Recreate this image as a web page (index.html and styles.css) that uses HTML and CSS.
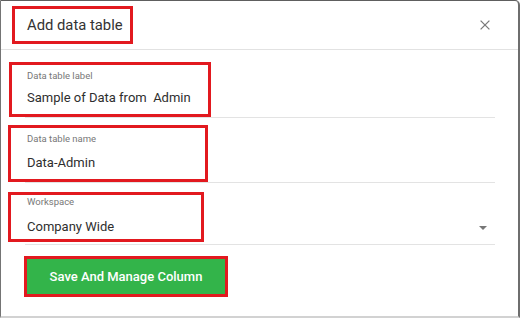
FILE: index.html
```html
<!DOCTYPE html>
<html>
<head>
<meta charset="utf-8">
<link rel="stylesheet" href="styles.css">
</head>
<body>
<div class="dialog">
  <div class="header">
    <div class="mark title-mark"><span class="title">Add data table</span></div>
    <svg class="close" width="10" height="10" viewBox="0 0 10 10"><path d="M0.6 0.6L9.4 9.4M9.4 0.6L0.6 9.4" stroke="#7a7a7a" stroke-width="1.3" fill="none"/></svg>
  </div>
  <div class="body">
    <div class="field f1">
      <div class="mark">
        <div class="label">Data table label</div>
        <div class="value">Sample of Data from&nbsp; Admin</div>
      </div>
    </div>
    <div class="field f2">
      <div class="mark">
        <div class="label">Data table name</div>
        <div class="value">Data-Admin</div>
      </div>
    </div>
    <div class="field f3">
      <div class="mark">
        <div class="label">Workspace</div>
        <div class="value">Company Wide</div>
      </div>
      <span class="caret"></span>
    </div>
    <div class="btn-mark"><button class="btn">Save And Manage Column</button></div>
  </div>
</div>
</body>
</html>
```
FILE: styles.css
```css
html, body {
  margin: 0;
  padding: 0;
  background: #fff;
}
body {
  font-family: Roboto, "Liberation Sans", sans-serif;
  color: #333;
}
.dialog {
  width: 520px;
  height: 318px;
  box-sizing: border-box;
  border-top: 1px solid #5e5e5e;
  border-left: 1px solid #747474;
  border-right: 2px solid #6e6e6e;
  border-bottom: 2px solid #d2d2d2;
  border-top-right-radius: 5px;
  background: #fff;
}
.header {
  height: 48px;
  border-bottom: 1px solid #e2e2e2;
  display: flex;
  align-items: center;
  padding-left: 11px;
}
.mark {
  border: 3px solid #e2191f;
  box-sizing: border-box;
}
.title-mark {
  width: 121px;
  padding: 6px 0 6px 12px;
}
.title {
  display: block;
  font-size: 14.8px;
  line-height: 20px;
  color: #333;
  white-space: nowrap;
}
.close {
  margin-left: auto;
  margin-right: 28px;
  display: block;
}
.field {
  margin-left: 24px;
  width: 470px;
  border-bottom: 1px solid #e3e3e3;
}
.label {
  font-size: 9.5px;
  line-height: 11px;
  color: #777;
  white-space: nowrap;
}
.value {
  font-size: 13px;
  line-height: 20px;
  color: #2e2e2e;
  white-space: nowrap;
}
.f1 {
  margin-top: 12px;
}
.f1 .mark {
  margin-left: -16px;
  width: 202px;
  padding: 5px 0 6px 15px;
}
.f1 .label {
  margin-bottom: 7px;
}
.f2 {
  margin-top: 7px;
}
.f2 .mark {
  margin-left: -17px;
  width: 200px;
  padding: 5px 0 6px 16px;
}
.f2 .label {
  margin-bottom: 9px;
}
.f3 {
  margin-top: 9px;
  padding-bottom: 2px;
  display: flex;
  align-items: flex-end;
}
.f3 .mark {
  margin-left: -17px;
  width: 196px;
  padding: 1px 0 2px 16px;
}
.f3 .label {
  margin-bottom: 10px;
}
.caret {
  margin-left: auto;
  margin-right: 8px;
  margin-bottom: 12px;
  width: 0;
  height: 0;
  border-left: 4px solid transparent;
  border-right: 4px solid transparent;
  border-top: 4px solid #777;
}
.btn-mark {
  display: flex;
  width: max-content;
  margin-top: 11px;
  margin-left: 23px;
  border: 3px solid #e2191f;
}
.btn {
  display: block;
  width: 198px;
  height: 35px;
  padding: 0;
  border: none;
  background: #33b44a;
  color: #fff;
  font-family: Roboto, "Liberation Sans", sans-serif;
  font-weight: 500;
  font-size: 13px;
  line-height: 35px;
  text-align: center;
}
```
